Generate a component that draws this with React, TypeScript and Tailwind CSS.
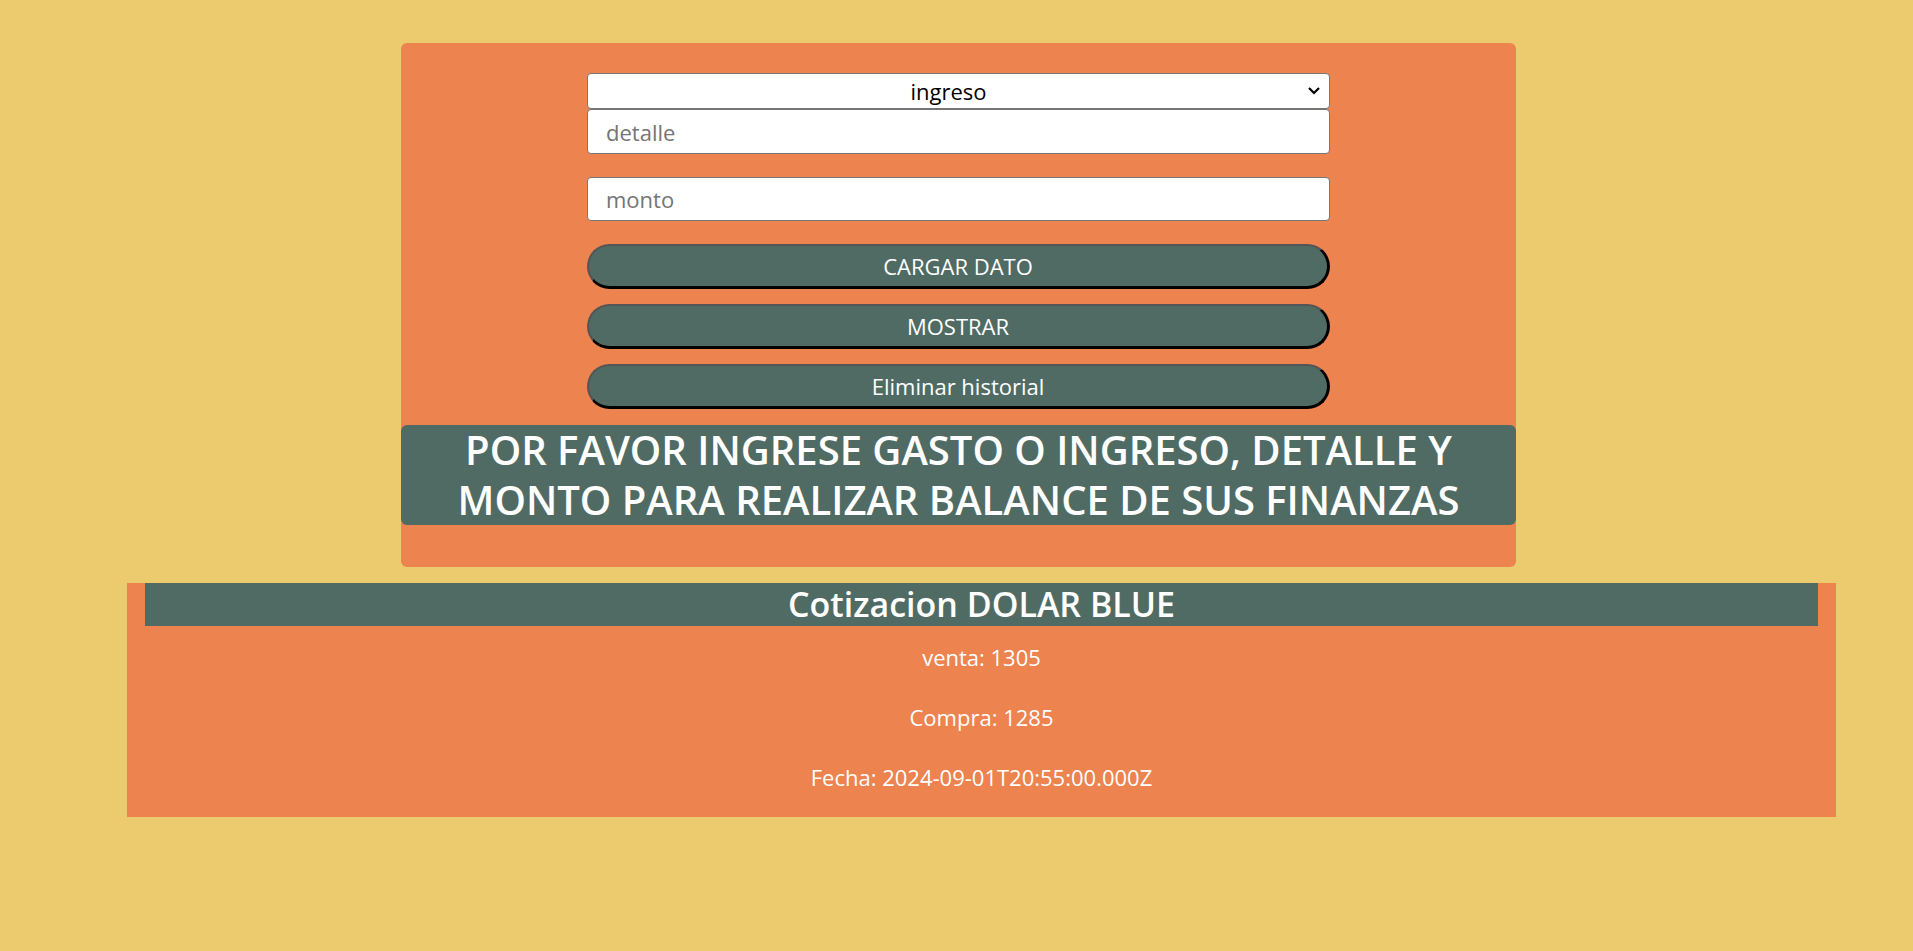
import React from "react";

const font = { fontFamily: '"Open Sans", "Noto Sans", sans-serif' };

const Boton = ({ children }: { children: React.ReactNode }) => (
  <button className="w-full h-[45px] rounded-full bg-[#506b64] text-white text-[22px] border-t-2 border-l-2 border-r-[3px] border-b-[3px] border-t-[#555] border-l-[#555] border-r-black border-b-black leading-none">
    {children}
  </button>
);

export default function App() {
  return (
    <div className="min-h-[951px] bg-[#ebcb6e] pt-[43px]" style={font}>
      {/* formulario */}
      <div className="ml-[401px] w-[1115px] bg-[#ed834f] rounded-md pt-[30px] pb-[42px]">
        <div className="w-[743px] mx-auto flex flex-col">
          <div className="relative h-[36px] bg-white border border-[#767676] rounded-sm">
            <div className="h-full flex items-center justify-center pr-[20px] text-[22px] text-black">ingreso</div>
            <svg className="absolute right-[8px] top-[12px]" width="14" height="10" viewBox="0 0 14 10">
              <path d="M2 2 L7 7 L12 2" fill="none" stroke="black" strokeWidth="2.2" />
            </svg>
          </div>
          <input
            placeholder="detalle"
            className="h-[45px] bg-white border border-[#767676] rounded-sm px-[18px] text-[22px] placeholder:text-[#757575] outline-none"
          />
          <input
            placeholder="monto"
            className="mt-[23px] h-[44px] bg-white border border-[#767676] rounded-sm px-[18px] text-[22px] placeholder:text-[#757575] outline-none"
          />
          <div className="mt-[23px] flex flex-col gap-[15px]">
            <Boton>CARGAR DATO</Boton>
            <Boton>MOSTRAR</Boton>
            <Boton>Eliminar historial</Boton>
          </div>
        </div>
        <h1 className="mt-[16px] bg-[#506b64] rounded-md text-white text-center font-semibold text-[40px] leading-[50px]">
          POR FAVOR INGRESE GASTO O INGRESO, DETALLE Y
          <br />
          MONTO PARA REALIZAR BALANCE DE SUS FINANZAS
        </h1>
      </div>

      {/* cotizacion */}
      <div className="mt-[16px] ml-[127px] w-[1709px] bg-[#ed834f] px-[18px] pb-[26px]">
        <h2 className="h-[43px] bg-[#506b64] text-white text-center font-semibold text-[34px] leading-[43px]">
          Cotizacion DOLAR BLUE
        </h2>
        <div className="flex flex-col items-center text-white text-[22px] leading-[28px] gap-[32px] pt-[17px]">
          <p>venta: 1305</p>
          <p>Compra: 1285</p>
          <p>Fecha: 2024-09-01T20:55:00.000Z</p>
        </div>
      </div>
    </div>
  );
}
